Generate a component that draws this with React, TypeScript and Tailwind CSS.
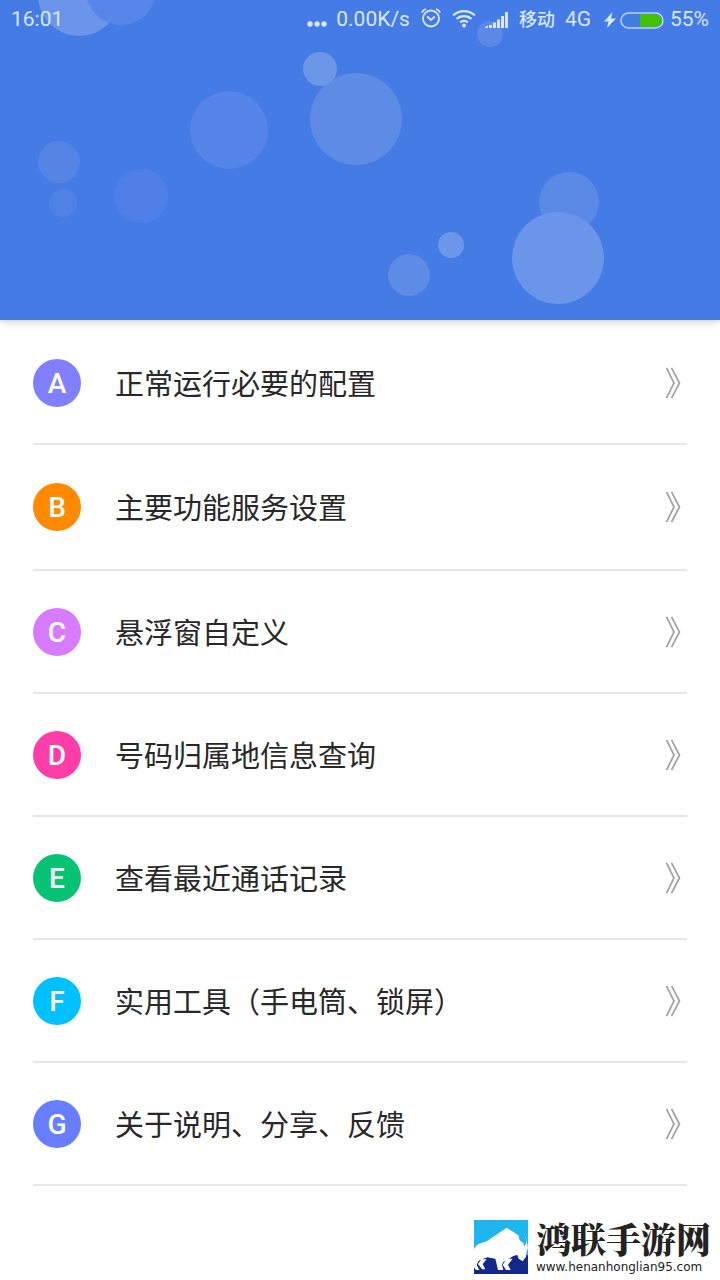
const bubbles = [
  { cx: 79, cy: -5, r: 41, fill: '#6b94ea' },
  { cx: 121, cy: -10, r: 35, fill: '#5886e8' },
  { cx: 490, cy: 34, r: 13, fill: '#5b8ae6' },
  { cx: 356, cy: 119, r: 46, fill: '#5e8ce5' },
  { cx: 320, cy: 69, r: 17, fill: '#6c97e9' },
  { cx: 229, cy: 130, r: 39, fill: '#5585e8' },
  { cx: 59, cy: 162, r: 21, fill: '#5584e4' },
  { cx: 63, cy: 203, r: 14, fill: '#5082e6' },
  { cx: 141, cy: 196, r: 27, fill: '#4f80e7' },
  { cx: 409, cy: 275, r: 21, fill: '#5d8be6' },
  { cx: 451, cy: 245, r: 13, fill: '#6c97e9' },
  { cx: 569, cy: 202, r: 30, fill: '#5b8ae6' },
  { cx: 558, cy: 258, r: 46, fill: '#6b95e9' },
];

const items = [
  { letter: 'A', label: '正常运行必要的配置', color: 'bg-[#8080ff]', height: 'h-[123px]' },
  { letter: 'B', label: '主要功能服务设置', color: 'bg-[#ff8a00]', height: 'h-[126px]' },
  { letter: 'C', label: '悬浮窗自定义', color: 'bg-[#d87cff]', height: 'h-[123px]' },
  { letter: 'D', label: '号码归属地信息查询', color: 'bg-[#fd3ea9]', height: 'h-[123px]' },
  { letter: 'E', label: '查看最近通话记录', color: 'bg-[#06c373]', height: 'h-[123px]' },
  { letter: 'F', label: '实用工具（手电筒、锁屏）', color: 'bg-[#00c0ff]', height: 'h-[123px]' },
  { letter: 'G', label: '关于说明、分享、反馈', color: 'bg-[#667eff]', height: 'h-[123px]' },
];

function StatusBar() {
  return (
    <div className="relative flex h-10 items-center justify-between px-[11px] text-[21px] text-[#d9e7ff]">
      <span>16:01</span>
      <div className="flex items-center">
        <svg className="mt-2 mr-2 h-2 w-[22px]" viewBox="0 0 22 8" fill="currentColor" aria-hidden="true">
          <circle cx="4" cy="4" r="2.7" />
          <circle cx="11" cy="4" r="2.7" />
          <circle cx="18" cy="4" r="2.7" />
        </svg>
        <span className="mr-[11px]">0.00K/s</span>
        {/* Alarm */}
        <svg className="mr-[11px] mb-1 size-5" viewBox="0 0 20 20" fill="none" stroke="currentColor" strokeWidth="1.8" aria-hidden="true">
          <circle cx="10" cy="10.5" r="8" />
          <path d="M6.2 8.5 10 12l3.800-3.500M.8 4.600Q2 2 5 1M19.200 4.600Q18 2 15 1" />
        </svg>
        {/* Wifi */}
        <svg className="mr-[9px] mb-1 h-5 w-6" viewBox="0 0 24 20" fill="none" stroke="currentColor" strokeWidth="2.2" aria-hidden="true">
          <path d="M1 7.5a16 16 0 0 1 22 0M4.6 11a11 11 0 0 1 14.8 0M8.2 14.4a6 6 0 0 1 7.6 0" />
          <circle cx="12" cy="17.5" r="1.9" fill="currentColor" stroke="none" />
        </svg>
        {/* Signal */}
        <svg className="mr-[11px] h-4 w-[23px]" viewBox="0 0 23 16" fill="currentColor" aria-hidden="true">
          <path d="M0 16v-1l3-1.500v2.500zM4 13h3v3H4zM8 10.500h3V16H8zM12 7.500h3V16h-3zM16 4h3v12h-3zM20 0h3v16h-3z" />
        </svg>
        <span className="mr-[10px] text-lg font-medium">移动</span>
        <span className="mr-[13px]">4G</span>
        <svg className="mr-1 h-4 w-3" viewBox="0 0 12 16" fill="currentColor" aria-hidden="true">
          <path d="M8.500 0 0 9.500h4.500L3 16l9-9.500H7z" />
        </svg>
        {/* Battery */}
        <svg className="mr-[6px] h-[17px] w-11" viewBox="0 0 44 17" aria-hidden="true">
          <path d="M20 2h15.500a6.500 6.500 0 0 1 0 13H20z" fill="#43c105" />
          <rect x="1" y="1" width="42" height="15" rx="7.500" fill="none" stroke="#b9d2ff" strokeWidth="1.500" />
        </svg>
        <span>55%</span>
      </div>
    </div>
  );
}

function Header() {
  return (
    <header className="relative h-80 bg-[#457be4] shadow-[0_1px_8px_rgba(0,0,0,0.25)]">
      <svg className="absolute inset-0 size-full" viewBox="0 0 720 320" preserveAspectRatio="xMidYMid slice" aria-hidden="true">
        {bubbles.map((b) => (
          <circle key={`${b.cx}-${b.cy}`} {...b} />
        ))}
      </svg>
      <StatusBar />
    </header>
  );
}

function Menu() {
  return (
    <ul className="px-[33px] pt-0.5">
      {items.map((item) => (
        <li key={item.letter}>
          <a href="#" className={`flex items-center border-b-2 border-[#e7e7e7] ${item.height}`}>
            <span className={`flex size-12 items-center justify-center rounded-full pt-0.5 text-[28px] font-medium text-white ${item.color}`}>
              {item.letter}
            </span>
            <span className="ml-[34px] flex-1 pb-0.5 font-['Noto_Sans_CJK_SC',sans-serif] text-[29px] leading-10 text-[#282828]">
              {item.label}
            </span>
            <svg className="mr-[6px] h-8 w-4" viewBox="0 0 16 32" fill="none" stroke="#a0a0a0" strokeWidth="1.700" aria-hidden="true">
              <path d="M1.500.8 9 16 1.500 31.200M6.500.8 14.500 16l-8 15.200" />
            </svg>
          </a>
        </li>
      ))}
    </ul>
  );
}

function BisonLogo() {
  return (
    <svg className="size-[54px]" viewBox="0 0 162 162" aria-hidden="true">
      <path d="M0 0h162v162H0z" fill="#1fb5ee" />
      <path d="M0 106h162v56H0z" fill="#12298a" />
      {/* Body and near legs */}
      <path
        d="M0 88Q4 76 14 72L38 64 98 23 124 40 136 48 156 52 162 84 158 94 156 110 146 124 134 116 130 104 118 108 88 126 84 134 88 150H72L64 116 40 112 14 122 8 134 16 150H6L0 142z"
        fill="#fff"
      />
      {/* Far legs */}
      <path d="M22 118h16L26 132l8 16H24L12 132zM98 116h18l-14 18 8 16H96l-10-16z" fill="#fff" />
      {/* Horn */}
      <path d="M142 32Q130 44 136 58q2 8 12 10l2 12q12-14 6-26l-8-6q-6-4-6-16z" fill="#1fb5ee" />
      <path d="M142 32v10l8 8 12 4V30z" fill="#1fb5ee" />
    </svg>
  );
}

function Footer() {
  return (
    <footer className="flex items-center justify-end gap-2 pt-[34px] pr-[9px] pb-[6px] text-[#222]">
      <BisonLogo />
      <div>
        <p className="font-['Noto_Serif_CJK_SC','Noto_Sans_CJK_SC',serif] text-[35px] leading-9 font-black">鸿联手游网</p>
        <p className="pt-1 font-['DejaVu_Sans',sans-serif] text-xs leading-[14px]">www.henanhonglian95.com</p>
      </div>
    </footer>
  );
}

export default function App() {
  return (
    <div className="bg-white font-['Roboto','Noto_Sans_CJK_SC',sans-serif]">
      <Header />
      <main>
        <Menu />
      </main>
      <Footer />
    </div>
  );
}
